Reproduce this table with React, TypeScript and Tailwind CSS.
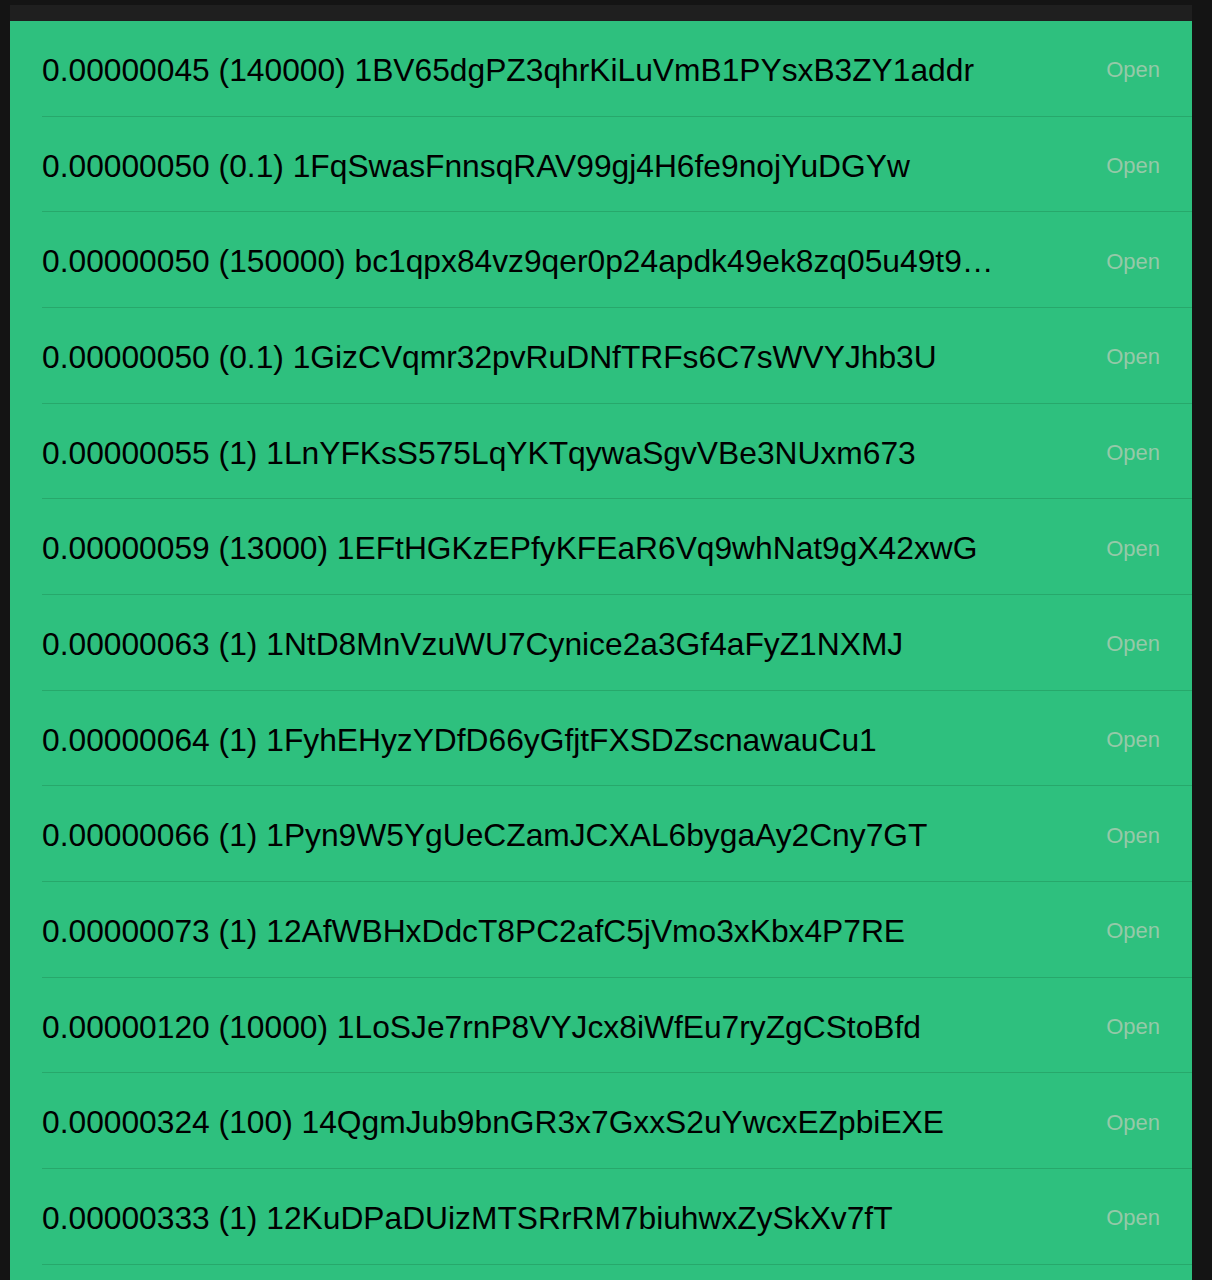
import React from 'react';

interface Fee {
  amount: string;
  count: string;
  address: string;
}

const fees: Fee[] = [
  { amount: '0.00000045', count: '140000', address: '1BV65dgPZ3qhrKiLuVmB1PYsxB3ZY1addr' },
  { amount: '0.00000050', count: '0.1', address: '1FqSwasFnnsqRAV99gj4H6fe9nojYuDGYw' },
  { amount: '0.00000050', count: '150000', address: 'bc1qpx84vz9qer0p24apdk49ek8zq05u49t9ylmrhx7c' },
  { amount: '0.00000050', count: '0.1', address: '1GizCVqmr32pvRuDNfTRFs6C7sWVYJhb3U' },
  { amount: '0.00000055', count: '1', address: '1LnYFKsS575LqYKTqywaSgvVBe3NUxm673' },
  { amount: '0.00000059', count: '13000', address: '1EFtHGKzEPfyKFEaR6Vq9whNat9gX42xwG' },
  { amount: '0.00000063', count: '1', address: '1NtD8MnVzuWU7Cynice2a3Gf4aFyZ1NXMJ' },
  { amount: '0.00000064', count: '1', address: '1FyhEHyzYDfD66yGfjtFXSDZscnawauCu1' },
  { amount: '0.00000066', count: '1', address: '1Pyn9W5YgUeCZamJCXAL6bygaAy2Cny7GT' },
  { amount: '0.00000073', count: '1', address: '12AfWBHxDdcT8PC2afC5jVmo3xKbx4P7RE' },
  { amount: '0.00000120', count: '10000', address: '1LoSJe7rnP8VYJcx8iWfEu7ryZgCStoBfd' },
  { amount: '0.00000324', count: '100', address: '14QgmJub9bnGR3x7GxxS2uYwcxEZpbiEXE' },
  { amount: '0.00000333', count: '1', address: '12KuDPaDUizMTSRrRM7biuhwxZySkXv7fT' },
];

const FeeRow: React.FC<{ fee: Fee }> = ({ fee }) => (
  <div className="ml-[32px] h-[95.67px] shrink-0 flex items-center border-b border-[#27a86b] pr-[32px] pt-[4px]">
    <div className="flex-1 min-w-0 pr-[100px] truncate text-[31.75px] text-black leading-[1.15]">
      {fee.amount} ({fee.count}) {fee.address}
    </div>
    <span className="text-[22px] text-[#95c9a8] leading-none">Open</span>
  </div>
);

const App: React.FC = () => {
  return (
    <div className="w-[1212px] h-[1280px] overflow-hidden bg-[#141414] pl-[10px] pr-[20px] pt-[5px] flex flex-col font-['Liberation_Sans',Arial,sans-serif]">
      <div className="h-[16px] shrink-0 bg-[#1f1f1f]" />
      <div className="flex-1 flex flex-col bg-[#2ec07e]">
        {fees.map((fee, i) => (
          <FeeRow key={i} fee={fee} />
        ))}
      </div>
    </div>
  );
};

export default App;
